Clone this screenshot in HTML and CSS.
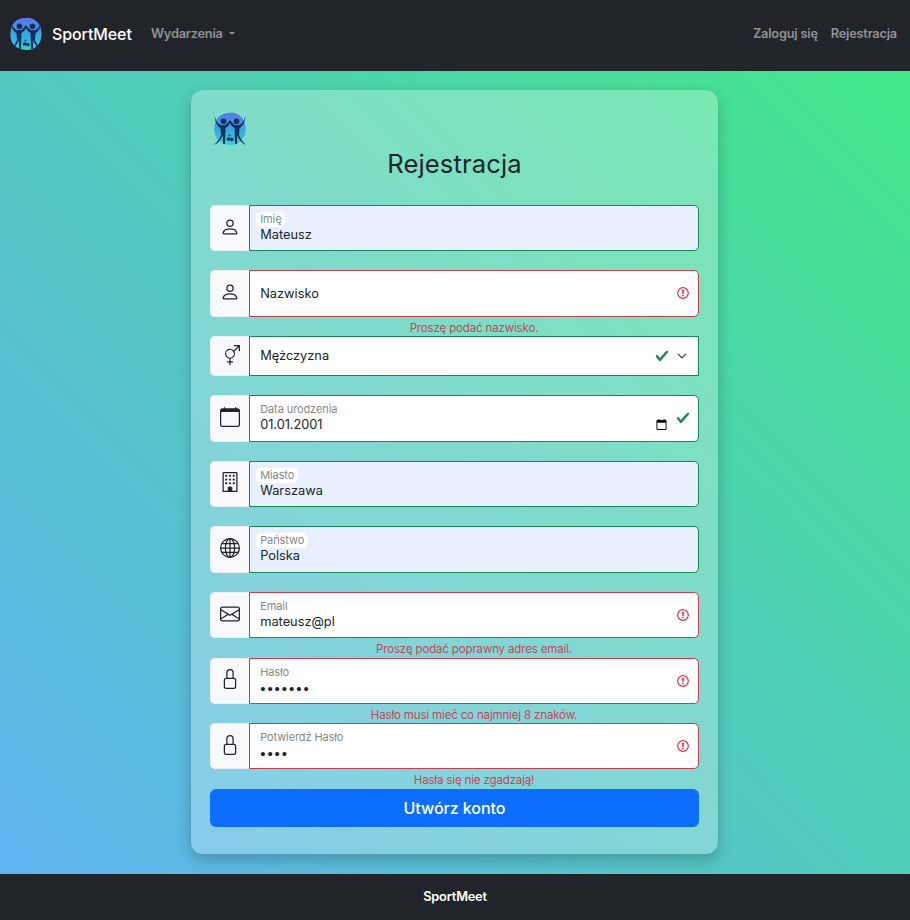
FILE: index.html
```html
<!DOCTYPE html>
<html lang="pl">
<head>
<meta charset="utf-8">
<title>SportMeet</title>
<link rel="stylesheet" href="styles.css">
</head>
<body>
<svg class="defs" aria-hidden="true">
  <defs>
    <linearGradient id="logo-fill" x1="0" y1="0" x2="0" y2="1">
      <stop offset="0" stop-color="#5b76e6"/><stop offset=".5" stop-color="#38a5e0"/><stop offset="1" stop-color="#2fd3cf"/>
    </linearGradient>
    <symbol id="logo" viewBox="0 0 34 34">
      <path d="M17 1C23 0 30 4 32 12C34 21 31 28 24 32C17 34 9 33 4 27C0 21 1 12 4 7C7 3 11 1 17 1Z" fill="url(#logo-fill)"/>
      <g fill="#152f61">
        <circle cx="10.500" cy="9.300" r="2.800"/><circle cx="23.500" cy="9.300" r="2.800"/>
        <path d="M1.500 4C3 9 5 12 8 13L12 13C14 12 15.500 10 17 8C18.500 10 20 12 22 13L26 13C29 12 31 9 32.500 4C32 10 30 14 26.500 16.500L26 23C27.500 27 30 30 33 33C28.500 31 25.500 27 24.200 23L24 32H22L21.500 16C19.500 15 18 13 17 11C16 13 14.500 15 12.500 16L12 32H10L9.800 23C8.500 27 5.500 31 1 33C4 30 6.500 27 8 23L7.500 16.500C4 14 2 10 1.500 4Z"/>
        <circle cx="15.500" cy="27" r="1.800"/><circle cx="18.700" cy="27.500" r="1.800"/><circle cx="16.500" cy="23.500" r="1"/>
      </g>
    </symbol>
    <symbol id="person" viewBox="0 0 16 16"><path d="M8 8a3 3 0 1 0 0-6 3 3 0 0 0 0 6m2-3a2 2 0 1 1-4 0 2 2 0 0 1 4 0m4 8c0 1-1 1-1 1H3s-1 0-1-1 1-4 6-4 6 3 6 4m-1-.004c-.001-.246-.154-.986-.832-1.664C11.516 10.680 10.289 10 8 10s-3.516.68-4.168 1.332c-.678.678-.83 1.418-.832 1.664z"/></symbol>
    <symbol id="gender" viewBox="0 0 16 16"><path fill-rule="evenodd" d="M11.500 1a.5.5 0 0 1 0-1h4a.5.5 0 0 1 .5.5v4a.5.5 0 0 1-1 0V1.707l-3.450 3.450A4 4 0 0 1 8.500 10.970V13H10a.5.5 0 0 1 0 1H8.500v1.500a.5.5 0 0 1-1 0V14H6a.5.5 0 0 1 0-1h1.500v-2.030a4 4 0 1 1 3.471-6.648L14.293 1zm-.997 4.346a3 3 0 1 0-5.006 3.309 3 3 0 0 0 5.006-3.310z"/></symbol>
    <symbol id="calendar" viewBox="0 0 16 16"><path d="M3.500 0a.5.5 0 0 1 .5.5V1h8V.5a.5.5 0 0 1 1 0V1h1a2 2 0 0 1 2 2v11a2 2 0 0 1-2 2H2a2 2 0 0 1-2-2V3a2 2 0 0 1 2-2h1V.5a.5.5 0 0 1 .5-.5M1 4v10a1 1 0 0 0 1 1h12a1 1 0 0 0 1-1V4z"/></symbol>
    <symbol id="building" viewBox="0 0 16 16"><path d="M3 .5H13a.5.5 0 0 1 .5.5V15.500H2.500V1A.5.5 0 0 1 3 .5Z" fill="none" stroke="currentColor"/><path d="M4 2.500h1v1H4zm3 0h1v1H7zm3 0h1v1h-1zM4 5.500h1v1H4zm3 0h1v1H7zm3 0h1v1h-1zM4 8.500h1v1H4zm3 0h1v1H7zm3 0h1v1h-1zM6 12.500a.5.5 0 0 1 .5-.5h2a.5.5 0 0 1 .5.5V15.500H6z" stroke="currentColor" stroke-width=".6" transform="translate(.5 0)"/></symbol>
    <symbol id="globe" viewBox="0 0 16 16"><g fill="none" stroke="currentColor"><circle cx="8" cy="8" r="7.500"/><ellipse cx="8" cy="8" rx="3.700" ry="7.500"/><path d="M8 .5v15M.5 8h15M1.500 4.500h13M1.500 11.500h13"/></g></symbol>
    <symbol id="envelope" viewBox="0 0 16 16"><path d="M0 4a2 2 0 0 1 2-2h12a2 2 0 0 1 2 2v8a2 2 0 0 1-2 2H2a2 2 0 0 1-2-2zm2-1a1 1 0 0 0-1 1v.217l7 4.200 7-4.200V4a1 1 0 0 0-1-1zm13 2.383-4.708 2.825L15 11.105zm-.034 6.876-5.640-3.471L8 9.583l-1.326-.795-5.640 3.470A1 1 0 0 0 2 13h12a1 1 0 0 0 .966-.741M1 11.105l4.708-2.897L1 5.383z"/></symbol>
    <symbol id="lock" viewBox="0 0 16 16"><path d="M8 1a2 2 0 0 1 2 2v4H6V3a2 2 0 0 1 2-2m3 6V3a3 3 0 0 0-6 0v4a2 2 0 0 0-2 2v5a2 2 0 0 0 2 2h6a2 2 0 0 0 2-2V9a2 2 0 0 0-2-2M5 8h6a1 1 0 0 1 1 1v5a1 1 0 0 1-1 1H5a1 1 0 0 1-1-1V9a1 1 0 0 1 1-1"/></symbol>
    <symbol id="invalid" viewBox="0 0 12 12"><circle cx="6" cy="6" r="5.300" fill="none" stroke="#dc3545" stroke-width="1.200"/><path d="M5.200 3h1.600L6.400 6.800h-.8z" fill="#dc3545" stroke="#dc3545" stroke-width=".6" stroke-linejoin="round"/><circle cx="6" cy="8.600" r=".9" fill="#dc3545"/></symbol>
    <symbol id="valid" viewBox="0 0 8 8"><path fill="#198754" d="M2.300 6.730.6 4.530c-.4-1.040.46-1.400 1.100-.8l1.100 1.400 3.400-3.800c.6-.63 1.600-.27 1.200.7l-4 4.600c-.43.5-.8.4-1.100.1z"/></symbol>
    <symbol id="chevron" viewBox="0 0 16 16"><path fill="none" stroke="#343a40" stroke-linecap="round" stroke-linejoin="round" stroke-width="2" d="m2 5 6 6 6-6"/></symbol>
    <symbol id="picker" viewBox="0 0 12 12"><path fill="#000" fill-rule="evenodd" d="M2.500 0h1.200v1h4.600V0h1.200v1H10.500a1 1 0 0 1 1 1v9a1 1 0 0 1-1 1h-9a1 1 0 0 1-1-1V2a1 1 0 0 1 1-1h1zM1.500 4.200v6.800h9V4.200z"/></symbol>
  </defs>
</svg>

<header class="navbar">
  <svg class="logo"><use href="#logo"/></svg>
  <span class="brand">SportMeet</span>
  <nav class="menu">
    <a class="nav-link dropdown">Wydarzenia</a>
    <div class="account"><a class="nav-link">Zaloguj się</a><a class="nav-link">Rejestracja</a></div>
  </nav>
</header>

<main>
  <form class="card">
    <svg class="logo"><use href="#logo"/></svg>
    <h1>Rejestracja</h1>

    <div class="row">
      <span class="addon"><svg><use href="#person"/></svg></span>
      <div class="field valid filled"><label>Imię</label><span class="value">Mateusz</span></div>
    </div>
    <div class="feedback"></div>

    <div class="row">
      <span class="addon"><svg><use href="#person"/></svg></span>
      <div class="field invalid single"><span class="value">Nazwisko</span><svg class="state"><use href="#invalid"/></svg></div>
    </div>
    <div class="feedback"><span>Proszę podać nazwisko.</span></div>

    <div class="row short">
      <span class="addon"><svg><use href="#gender"/></svg></span>
      <div class="field valid single select"><span class="value">Mężczyzna</span><svg class="state"><use href="#valid"/></svg><svg class="chevron"><use href="#chevron"/></svg></div>
    </div>
    <div class="feedback"></div>

    <div class="row">
      <span class="addon"><svg><use href="#calendar"/></svg></span>
      <div class="field valid"><label>Data urodzenia</label><span class="value date">01.01.2001</span><svg class="picker"><use href="#picker"/></svg><svg class="state"><use href="#valid"/></svg></div>
    </div>
    <div class="feedback"></div>

    <div class="row">
      <span class="addon"><svg><use href="#building"/></svg></span>
      <div class="field valid filled"><label>Miasto</label><span class="value">Warszawa</span></div>
    </div>
    <div class="feedback"></div>

    <div class="row">
      <span class="addon"><svg><use href="#globe"/></svg></span>
      <div class="field valid filled"><label>Państwo</label><span class="value">Polska</span></div>
    </div>
    <div class="feedback"></div>

    <div class="row">
      <span class="addon"><svg><use href="#envelope"/></svg></span>
      <div class="field invalid"><label>Email</label><span class="value">mateusz@pl</span><svg class="state"><use href="#invalid"/></svg></div>
    </div>
    <div class="feedback"><span>Proszę podać poprawny adres email.</span></div>

    <div class="row">
      <span class="addon"><svg><use href="#lock"/></svg></span>
      <div class="field invalid"><label>Hasło</label><span class="value dots">•••••••</span><svg class="state"><use href="#invalid"/></svg></div>
    </div>
    <div class="feedback"><span>Hasło musi mieć co najmniej 8 znaków.</span></div>

    <div class="row">
      <span class="addon"><svg><use href="#lock"/></svg></span>
      <div class="field invalid"><label>Potwierdź Hasło</label><span class="value dots">••••</span><svg class="state"><use href="#invalid"/></svg></div>
    </div>
    <div class="feedback"><span>Hasła się nie zgadzają!</span></div>

    <button type="button">Utwórz konto</button>
  </form>
</main>

<footer>SportMeet</footer>
</body>
</html>
```
FILE: styles.css
```css
* { box-sizing: border-box; }
body {
  margin: 0;
  height: 920px;
  overflow: hidden;
  display: flex;
  flex-direction: column;
  font-family: Inter, "Liberation Sans", sans-serif;
  font-size: 12.8px;
  color: #212529;
}
svg { display: block; fill: currentColor; }
.defs { position: absolute; width: 0; height: 0; }
.logo { width: 34px; height: 34px; flex: none; }

.navbar {
  height: 71px;
  flex: none;
  display: flex;
  align-items: center;
  padding: 0 13px 3px 9px;
  background: #212529;
}
.brand { margin-left: 9px; font-size: 16px; font-weight: 500; letter-spacing: -.1px; color: #fff; width: 99px; }
.menu { flex: 1; display: flex; justify-content: space-between; align-items: center; padding-bottom: 1px; }
.nav-link { color: #909294; font-weight: 600; letter-spacing: -.22px; }
.dropdown { display: flex; align-items: center; gap: 6px; }
.dropdown::after { content: ""; border: 3px solid transparent; border-top-color: currentColor; border-bottom: 0; }
.account { display: flex; gap: 13px; }

main {
  height: 803px;
  flex: none;
  padding: 19px 192px 0 191px;
  background: linear-gradient(45deg, #5fb3f0, #52cbbd 50%, #43e689);
}
.card {
  height: 764.400px;
  padding: 21.600px 19.200px 0;
  display: flex;
  flex-direction: column;
  background: rgba(255, 255, 255, .27);
  border-radius: 12px;
  box-shadow: 0 6px 15px rgba(0, 0, 0, .22), 0 0 1px rgba(0, 0, 0, .15);
}
.card .logo { margin-left: 3px; }
h1 { height: 59.250px; margin: 0; line-height: 36px; font-size: 25.600px; font-weight: 400; letter-spacing: .1px; text-align: center; }

.row { display: flex; height: 46.400px; flex: none; }
.row.short { height: 40px; }
.addon {
  width: 39px;
  display: flex;
  align-items: center;
  justify-content: center;
  padding-bottom: 3px;
  background: #f8f9fa;
  border: 1px solid #eceff1;
  border-right: 0;
  border-radius: 5px 0 0 5px;
}
.addon svg { width: 20px; height: 20px; }
.field {
  position: relative;
  flex: 1;
  display: flex;
  flex-direction: column;
  align-items: flex-start;
  padding: 6px 10px 0;
  background: #fff;
  border: 1px solid #198754;
  border-radius: 0 5px 5px 0;
}
.field.invalid { border-color: #c93d4c; }
.field.filled { background: #e8f0fe; }
.field.select { border-radius: 0; }
.field.single { justify-content: center; padding-top: 0; }
label { height: 15px; line-height: 15px; font-size: 11px; letter-spacing: -.1px; color: #85898c; }
.filled label { margin: 0 -4px; padding: 0 4px; background: #fff; border-radius: 5px; }
.value { line-height: 16px; font-size: 12.800px; letter-spacing: 0; }
.date { letter-spacing: -.05px; }
.dots { font-family: "Liberation Sans", sans-serif; font-size: 15px; letter-spacing: 1.950px; line-height: 18px; }
.state { position: absolute; right: 9px; top: 16px; width: 12px; height: 12px; }
.valid .state { width: 14px; height: 14px; right: 8px; top: 15px; }
.select .state { right: 29px; top: 12px; }
.chevron { position: absolute; right: 11px; top: 14px; width: 10px; height: 10px; }
.picker { position: absolute; right: 31px; top: 23px; width: 11px; height: 11px; }

.feedback {
  height: 19.200px;
  flex: none;
  padding: 2px 0 0 39px;
  line-height: 18px;
  text-align: center;
  font-size: 11.500px;
  letter-spacing: -.15px;
  color: #c0485a;
}
button {
  height: 38.400px;
  flex: none;
  padding: 0;
  border: 0;
  border-radius: 6px;
  background: #0d6efd;
  color: #fff;
  font: 500 16px Inter, sans-serif;
  letter-spacing: -.05px;
}
footer {
  flex: 1;
  background: #212529;
  color: #fff;
  font-weight: 600;
  letter-spacing: -.2px;
  text-align: center;
  line-height: 45px;
}
```
